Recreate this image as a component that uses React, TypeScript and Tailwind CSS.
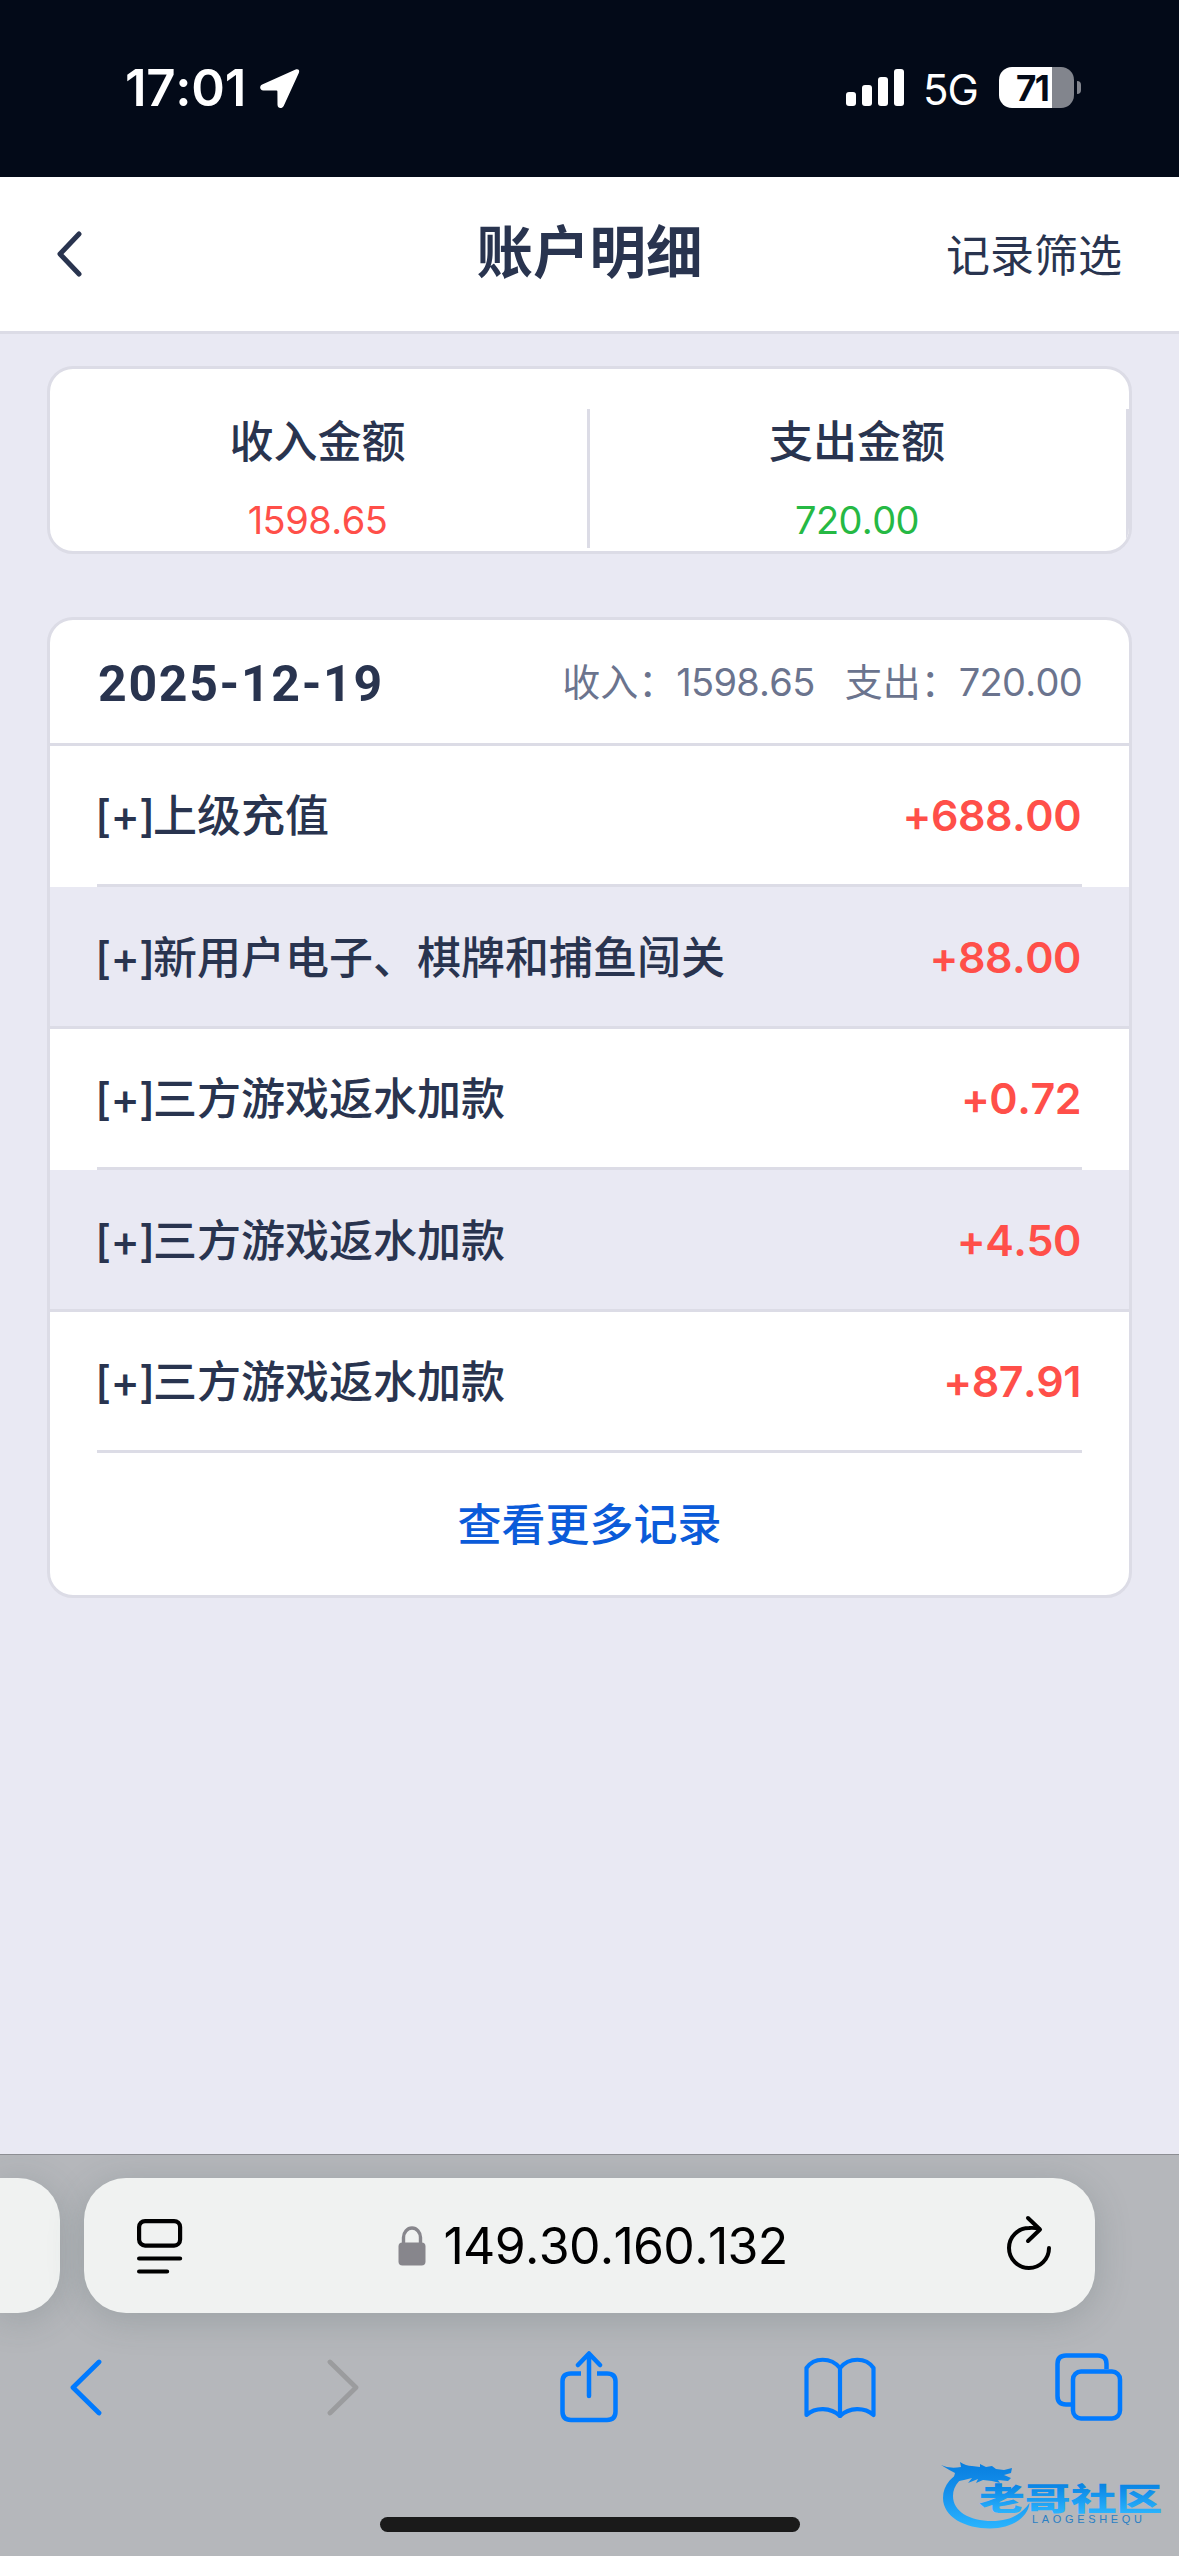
import clsx from "clsx";

interface RecordItem {
  name: string;
  amount: string;
}

const records: RecordItem[] = [
  { name: "上级充值", amount: "+688.00" },
  { name: "新用户电子、棋牌和捕鱼闯关", amount: "+88.00" },
  { name: "三方游戏返水加款", amount: "+0.72" },
  { name: "三方游戏返水加款", amount: "+4.50" },
  { name: "三方游戏返水加款", amount: "+87.91" },
];

function StatusBar() {
  return (
    <div className="h-[177px] bg-[#030a18] text-white flex justify-between pl-[125px] pr-[98px]">
      <div className="flex items-start pt-[58px]">
        <span className="w-[135px] text-[51px] leading-[60px] font-semibold tracking-[-0.3px] whitespace-nowrap">17:01</span>
        <svg className="mt-[11px]" width="40" height="40" viewBox="0 0 40 40" fill="currentColor">
          <path d="M35.6.6 2.2 15.4C-1 17-.3 21.400 3.400 21.500L16.500 21.600Q17.400 21.700 17.400 22.600L17.500 35.800C17.600 39.700 22.200 40.200 23.800 36.800L38.800 4C40 1.300 38.300-.6 35.600.6Z" />
        </svg>
      </div>

      <div className="flex items-start pt-[67px]">
        <svg className="mt-[2px]" width="58" height="37" viewBox="0 0 58 37" fill="currentColor">
          <rect x="0" y="23" width="10" height="14" rx="3" />
          <rect x="16" y="16" width="10" height="21" rx="3" />
          <rect x="32" y="8" width="10" height="29" rx="3" />
          <rect x="48" y="0" width="10" height="37" rx="3" />
        </svg>
        <span className="ml-[19px] w-[76px] text-[42px] leading-[45px] tracking-[-1px]">5G</span>
        <div className="w-[75px] h-[41px] rounded-[13px] overflow-hidden bg-[linear-gradient(to_right,#fff_53px,#82858d_53px)] pl-[17px]">
          <span className="block text-[35px] leading-[42px] font-bold tracking-[-1.500px] text-[#030a18]">71</span>
        </div>
        <div className="ml-[3px] mt-[14px] w-1 h-[13px] rounded-r-full bg-[#82858d]" />
      </div>
    </div>
  );
}

function Header() {
  return (
    <div className="h-[157px] bg-white border-b-[3px] border-[#dcdce6] grid grid-cols-3 items-center px-[57px] text-[#29344f]">
      <svg width="26" height="46" viewBox="0 0 26 46" fill="none" stroke="currentColor" strokeWidth="5" strokeLinecap="round" strokeLinejoin="round">
        <path d="M22 3 3 23l19 20" />
      </svg>
      <h1 className="text-[56.5px] leading-[60px] font-bold text-center whitespace-nowrap -mt-[2px]">账户明细</h1>
      <button className="text-[44px] leading-[50px] text-right mt-[3px]">记录筛选</button>
    </div>
  );
}

function Summary() {
  return (
    <div className="h-[188px] rounded-[26px] border-[3px] border-[#dcdce6] bg-white overflow-hidden flex items-start pt-10 text-center">
      <div className="w-[540px] h-[139px] border-r-[3px] border-[#dcdce6]">
        <div className="pt-px pr-[2px] text-[44px] leading-[64px] font-medium text-[#29344f]">收入金额</div>
        <div className="mt-[13px] pr-[2px] text-[38px] leading-[66px] tracking-[-0.5px] text-[#ff4f49]">1598.65</div>
      </div>
      <div className="w-[539px] h-[139px] border-r-[3px] border-[#dcdce6]">
        <div className="pt-px pr-[2px] text-[44px] leading-[64px] font-medium text-[#29344f]">支出金额</div>
        <div className="mt-[13px] pr-[2px] text-[38px] leading-[66px] tracking-[-0.6px] text-[#26b944]">720.00</div>
      </div>
    </div>
  );
}

function RecordRow({ item, index }: { item: RecordItem; index: number }) {
  const odd = index % 2 === 1;
  return (
    <div className={clsx(odd ? "h-[142px] bg-[#e9e9f3] border-b-[3px] border-[#dcdce6] px-12" : "h-[141px] bg-white px-[47px]")}>
      <div className={clsx("h-full flex items-center justify-between", odd ? "px-0" : "border-b-[3px] border-[#dcdce6] px-px")}>
        <span className="-ml-[3px] pt-[2px] text-[44px] leading-[60px] font-medium text-[#29344f] whitespace-nowrap">
          <span className="inline-block w-[58px] tracking-[-0.8px]">[+]</span>
          {item.name}
        </span>
        <span className="text-[43px] leading-[60px] font-semibold tracking-[-0.5px] text-[#ff4f49]">{item.amount}</span>
      </div>
    </div>
  );
}

function DayCard() {
  return (
    <div className="mt-[63px] rounded-[26px] border-[3px] border-[#dcdce6] bg-white overflow-hidden">
      <div className="h-[126px] border-b-[3px] border-[#dcdce6] flex items-center justify-between pl-12 pr-[47px]">
        <span className="pt-[4px] font-[Roboto] text-[50px] leading-[60px] font-bold tracking-[1.700px] text-[#29344f]">2025-12-19</span>
        <div className="flex text-[38px] leading-[60px] text-[#6b748e] whitespace-nowrap">
          <span>收入：</span>
          <span className="tracking-[-0.7px]">1598.65</span>
          <span className="ml-[30px]">支出：</span>
          <span className="tracking-[-0.7px]">720.00</span>
        </div>
      </div>
      {records.map((item, i) => (
        <RecordRow key={i} item={item} index={i} />
      ))}
      <button className="block w-full h-[142px] text-[44px] leading-[144px] font-medium text-[#0b5bd9]">查看更多记录</button>
    </div>
  );
}

function AddressBar() {
  return (
    <div className="flex gap-6 mt-[23px]">
      <div className="w-[60px] h-[135px] rounded-r-[42px] bg-[#f0f2f1] shadow-[0_6px_36px_rgba(60,80,80,0.22)]" />
      <div className="w-[1011px] h-[135px] rounded-[42px] bg-[#f0f2f1] shadow-[0_6px_36px_rgba(60,80,80,0.22)] flex items-center justify-between pl-[53px] pr-[43px] text-black">
        <svg className="mt-[9px]" width="46" height="62" viewBox="0 0 46 62" fill="none" stroke="currentColor" strokeWidth="4.200" strokeLinecap="round">
          <rect x="2.100" y="2.100" width="41" height="24.500" rx="6" />
          <path d="M2.100 39.500h41M2.100 52.500h28" />
        </svg>
        <div className="flex items-center pr-[3px]">
          <svg className="mr-[17px]" width="28" height="40" viewBox="0 0 28 40">
            <path d="M5.500 18v-6.500a8.500 9.500 0 0 1 17 0V18" fill="none" stroke="#87868c" strokeWidth="3.400" />
            <rect x="0.500" y="16.500" width="27" height="23" rx="4" fill="#87868c" />
          </svg>
          <span className="text-[50px] leading-[60px] tracking-[-0.7px]">149.30.160.132</span>
        </div>
        <svg className="-mt-[6px]" width="46" height="56" viewBox="0 0 46 56" fill="none" stroke="currentColor" strokeWidth="4" strokeLinecap="round" strokeLinejoin="round">
          <path d="M43 33A20 20 0 1 1 23 13q6-.5 10 1" />
          <path d="m22 3 12 11.500L22 26" />
        </svg>
      </div>
    </div>
  );
}

function Toolbar() {
  return (
    <div className="mt-[34px] h-[80px] pl-[69px] pr-[56px] flex items-center justify-between text-[#007aff]">
      <svg width="34" height="58" viewBox="0 0 34 58" fill="none" stroke="currentColor" strokeWidth="4.800" strokeLinecap="round" strokeLinejoin="round">
        <path d="M30 4 4 29.500 30 55" />
      </svg>
      <svg className="ml-[158px]" width="34" height="58" viewBox="0 0 34 58" fill="none" stroke="#9b9c9e" strokeWidth="4.800" strokeLinecap="round" strokeLinejoin="round">
        <path d="m4 4 26 25.500L4 55" />
      </svg>
      <svg className="ml-[135px]" width="58" height="72" viewBox="0 0 58 72" fill="none" stroke="currentColor" strokeWidth="4.500" strokeLinecap="round" strokeLinejoin="round">
        <path d="M21 22.500H11q-8.500 0-8.500 8v30q0 8.500 8.500 8.500h36q8.500 0 8.500-8.500v-30q0-8-8.500-8H37" strokeLinecap="butt" />
        <path d="M29 45V3M18 14 29 2.500 40 14" />
      </svg>
      <svg className="ml-[120px]" width="74" height="62" viewBox="0 0 74 62" fill="none" stroke="currentColor" strokeWidth="4.200" strokeLinecap="round" strokeLinejoin="round">
        <path d="M37 12C28 1 11 1 3.500 12v47c9-8 24-8 33.500 1 9.500-9 24.500-9 33.500-1V12C63 1 46 1 37 12Z" />
        <path d="M37 12v48" />
      </svg>
      <svg className="ml-[113px]" width="68" height="68" viewBox="0 0 68 68" fill="none" stroke="currentColor" strokeWidth="4.500">
        <path d="M16 51.500h-5q-8.500 0-8.500-8.500V11q0-8.500 8.500-8.500h32q8.500 0 8.500 8.500v5" />
        <rect x="18" y="18.500" width="47" height="47" rx="8" />
      </svg>
    </div>
  );
}

function Watermark() {
  return (
    <svg className="absolute right-[14px] bottom-6 pointer-events-none" width="226" height="76" viewBox="0 0 226 76">
      <defs>
        <linearGradient id="wm" gradientUnits="userSpaceOnUse" x1="0" y1="5" x2="0" y2="74">
          <stop offset="0" stopColor="#087edf" />
          <stop offset="0.450" stopColor="#1590ec" />
          <stop offset="1" stopColor="#2ab6ff" />
        </linearGradient>
        <linearGradient id="wmText" gradientUnits="userSpaceOnUse" x1="0" y1="26" x2="0" y2="57">
          <stop offset="0" stopColor="#0680e2" />
          <stop offset="1" stopColor="#2ab3fd" />
        </linearGradient>
      </defs>
      {/* dragon body and tail */}
      <path d="M30 13C13 18 4 29 4 42 4 61 26 72.500 51 72.500 72 72.500 89 62 90.500 47 82 59 70 65 53 65 30 65 14 55 14 40 14 29 22 20 36 17Z" fill="url(#wm)" />
      {/* head, horns and whiskers */}
      <path d="M2 9q8 4 20 2L21 6q6 4 12 4l8 1 0-3 6 3 6-1 4 3 8 1 8-2-1 5-7 2 7 3-3 3-10-1 2 3-8-2-9-1-7 3 2-4-10 4 4-5-8 2q-8 1-12 4l3-11Q10 14 2 9Z" fill="url(#wm)" />
      <g transform="translate(40 0) scale(1.480 1)">
        <text x="0" y="54" fontFamily="'Noto Sans CJK SC', sans-serif" fontSize="31" fontWeight="900" fill="url(#wmText)">老哥社区</text>
      </g>
      <text x="93" y="67" fontFamily="'Liberation Sans', sans-serif" fontSize="11" textLength="110" fill="#2a7fc4">LAOGESHEQU</text>
    </svg>
  );
}

export default function App() {
  return (
    <div className="relative w-[1179px] h-[2556px] overflow-hidden flex flex-col bg-[#e9e9f3] font-[Inter,'Noto_Sans_CJK_SC',sans-serif] [font-kerning:none]">
      <StatusBar />
      <Header />
      <main className="flex-1 pt-8 px-[47px]">
        <Summary />
        <DayCard />
      </main>
      <footer className="h-[402px] shrink-0 overflow-hidden border-t border-[#8d8e93] bg-[#b5b7bb]">
        <AddressBar />
        <Toolbar />
        <div className="mx-auto mt-[90px] w-[420px] h-[15px] rounded-full bg-[#1a1a1a]" />
      </footer>
      <Watermark />
    </div>
  );
}
